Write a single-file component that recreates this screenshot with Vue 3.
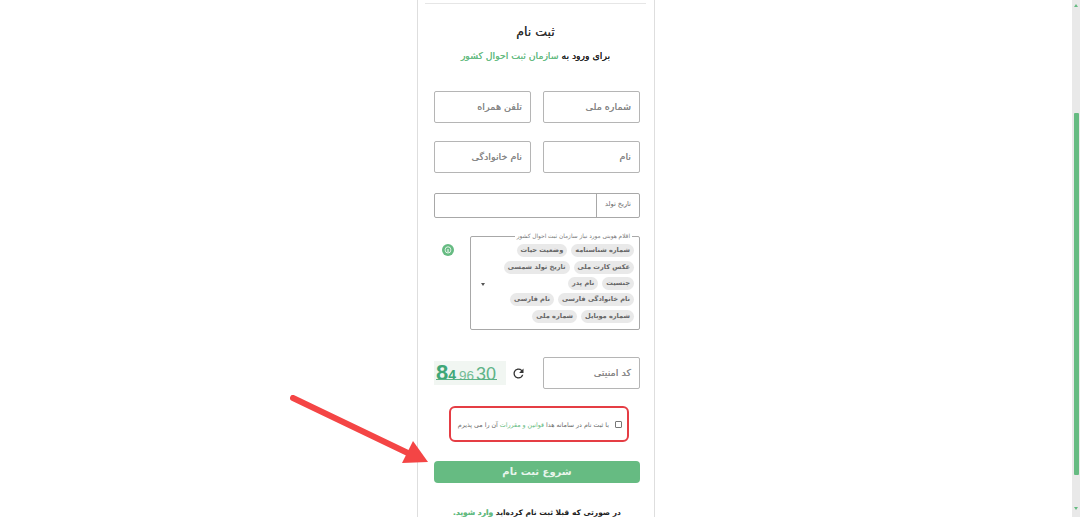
<template>
  <div class="screen">
    <div class="page">
      <div class="card">
        <hr class="top-line" />
        <h2 class="title">ثبت نام</h2>
        <p class="subtitle">برای ورود به <span class="green">سازمان ثبت احوال کشور</span></p>

        <div class="form">
          <div class="row first">
            <div class="field">شماره ملی</div>
            <div class="field">تلفن همراه</div>
          </div>
          <div class="row second">
            <div class="field">نام</div>
            <div class="field">نام خانوادگی</div>
          </div>

          <div class="date-group">
            <span class="date-label">تاریخ تولد</span>
            <span class="date-input"></span>
          </div>

          <div class="select-row">
            <fieldset class="scopes">
              <legend>اقلام هویتی مورد نیاز سازمان ثبت احوال کشور</legend>
              <div v-for="(line, i) in scopeRows" :key="i" class="chip-row">
                <span v-for="chip in line" :key="chip" class="chip">{{ chip }}</span>
              </div>
              <span class="caret"></span>
            </fieldset>
            <svg class="info-icon" viewBox="0 0 12 12">
              <circle cx="6" cy="6" r="6" fill="#66bb82" />
              <rect x="3.2" y="2.8" width="5.6" height="6.2" rx="2.8" fill="none" stroke="#e4f4e9" stroke-width="1" />
              <rect x="5.4" y="5" width="1.2" height="3.2" fill="#e4f4e9" />
            </svg>
          </div>

          <div class="captcha-row">
            <div class="field">کد امنیتی</div>
            <svg class="refresh" viewBox="0 0 24 24">
              <path fill="#333" d="M17.65 6.35A7.958 7.958 0 0 0 12 4c-4.42 0-7.99 3.58-7.99 8s3.57 8 7.99 8c3.73 0 6.84-2.55 7.73-6h-2.08A5.99 5.99 0 0 1 12 18c-3.31 0-6-2.69-6-6s2.69-6 6-6c1.66 0 3.14.69 4.22 1.78L13 11h7V4l-2.35 2.35z" />
            </svg>
            <div class="captcha">
              <span class="big">8</span><span class="small">4</span>
              <span class="mid">96</span>
              <span class="last">30</span>
              <i class="strike"></i>
            </div>
          </div>

          <div class="terms">
            <span class="check"></span>
            <span>با ثبت نام در سامانه هدا <span class="green">قوانین و مقررات</span> آن را می پذیرم</span>
          </div>

          <button class="submit" type="button">شروع ثبت نام</button>

          <p class="login-note">در صورتی که قبلا ثبت نام کرده‌اید <span class="green">وارد شوید.</span></p>
        </div>
      </div>
    </div>

    <div class="scrollbar">
      <span class="arrow up"></span>
      <span class="thumb"></span>
      <span class="arrow down"></span>
    </div>

    <svg class="pointer" viewBox="0 0 150 75">
      <line x1="3" y1="3" x2="122" y2="60" stroke="#f44545" stroke-width="6" stroke-linecap="round" />
      <polygon points="123,46 138,67 112,68" fill="#f44545" />
    </svg>
  </div>
</template>

<script setup>
const scopeRows = [
  ['شماره شناسنامه', 'وضعیت حیات'],
  ['عکس کارت ملی', 'تاریخ تولد شمسی'],
  ['جنسیت', 'نام پدر'],
  ['نام خانوادگی فارسی', 'نام فارسی'],
  ['شماره موبایل', 'شماره ملی'],
]
</script>

<style>
html,
body {
  margin: 0;
  height: 517px;
  overflow: hidden;
  background: #fff;
}
</style>

<style scoped>
.screen {
  position: relative;
  display: flex;
  width: 1080px;
  height: 517px;
  overflow: hidden;
  background: #fff;
  font-family: 'DejaVu Sans', sans-serif;
  color: #333;
}

.page {
  flex: 1;
  display: flex;
  justify-content: center;
}

.card {
  box-sizing: border-box;
  width: 238px;
  height: 517px;
  padding: 3px 8px 0 7px;
  border-left: 1px solid #dedede;
  border-right: 1px solid #dedede;
  direction: rtl;
  overflow: hidden;
}

.top-line {
  margin: 0;
  border: 0;
  border-top: 1px solid #e6e6e6;
}

.title {
  margin: 20px 0 0;
  height: 16px;
  line-height: 16px;
  font-size: 12.5px;
  font-weight: 400;
  text-align: center;
  color: #333;
  text-shadow: 0 0 0.4px #333;
}

.subtitle {
  margin: 9px 0 0;
  height: 14px;
  line-height: 14px;
  font-size: 9.3px;
  text-align: center;
  color: #222;
  text-shadow: 0 0 0.4px #222;
}

.green {
  color: #66bb82;
  text-shadow: 0 0 0.4px #66bb82;
}

.form {
  padding: 0 6px 0 9px;
}

.row {
  display: flex;
  justify-content: space-between;
}

.row.first {
  margin-top: 28px;
}

.row.second {
  margin-top: 18px;
}

.field {
  box-sizing: border-box;
  width: 97px;
  height: 32px;
  padding-right: 8px;
  line-height: 30px;
  font-size: 9.6px;
  color: #888;
  background: #fff;
  border: 1px solid #b5b5b5;
  border-radius: 2px;
  text-shadow: 0 0 0.4px #888;
}

.date-group {
  display: flex;
  height: 25px;
  margin-top: 20px;
  box-sizing: border-box;
  border: 1px solid #a8a8a8;
  border-radius: 2px;
}

.date-label {
  width: 42px;
  line-height: 21px;
  font-size: 6.6px;
  text-align: center;
  color: #666;
  border-left: 1px solid #a8a8a8;
}

.date-input {
  flex: 1;
}

.select-row {
  display: flex;
  margin-top: 14px;
}

.scopes {
  position: relative;
  box-sizing: border-box;
  width: 170px;
  height: 98px;
  margin: 0;
  padding: 2.5px 5px 0;
  border: 1px solid #a8a8a8;
  border-radius: 2px;
}

.scopes legend {
  margin: 0 2px;
  padding: 0 2px;
  font-size: 5.8px;
  line-height: 8px;
  color: #777;
}

.chip-row {
  display: flex;
  gap: 4px;
  height: 16.4px;
  align-items: center;
}

.chip {
  padding: 0 4px;
  height: 13px;
  line-height: 13px;
  font-size: 6.6px;
  font-weight: 700;
  white-space: nowrap;
  color: #666;
  background: #e9e9e9;
  border-radius: 6.5px;
}

.caret {
  position: absolute;
  left: 10px;
  top: 43px;
  border-top: 3px solid #555;
  border-left: 2px solid transparent;
  border-right: 2px solid transparent;
}

.info-icon {
  width: 12px;
  height: 12px;
  margin: 12px 16px 0 0;
}

.captcha-row {
  display: flex;
  align-items: center;
  margin-top: 27px;
}

.refresh {
  width: 15px;
  height: 15px;
  margin-right: 17px;
}

.captcha {
  position: relative;
  direction: ltr;
  box-sizing: border-box;
  width: 72px;
  height: 24px;
  margin-right: 5px;
  padding-left: 2px;
  line-height: 24px;
  white-space: nowrap;
  color: #3fa777;
  background: #f1f6f2;
  font-family: 'Liberation Sans', sans-serif;
}

.big {
  font-size: 22px;
  font-weight: 700;
}

.small {
  font-size: 14px;
  font-weight: 700;
}

.mid {
  margin-left: 3px;
  font-size: 13.5px;
  color: #74bd96;
}

.last {
  margin-left: 2px;
  font-size: 18px;
  color: #5fb388;
}

.strike {
  position: absolute;
  left: 2px;
  right: 9px;
  top: 18px;
  height: 1px;
  background: #5cb286;
}

.terms {
  display: flex;
  align-items: center;
  gap: 6px;
  box-sizing: border-box;
  width: 180px;
  height: 36px;
  margin: 17px 11px 0 0;
  padding: 0 5px 0 0;
  font-size: 6.3px;
  color: #666;
  border: 2px solid #e53d44;
  border-radius: 6px;
  white-space: nowrap;
}

.terms .green {
  text-shadow: none;
}

.check {
  flex: none;
  box-sizing: border-box;
  width: 7px;
  height: 7px;
  background: #fff;
  border: 1px solid #777;
  border-radius: 1px;
}

.submit {
  display: block;
  width: 206px;
  height: 22px;
  margin-top: 19px;
  padding: 0 0 2px;
  font-family: inherit;
  font-size: 10px;
  font-weight: 700;
  letter-spacing: 0.3px;
  color: #e8f5ec;
  background: #66bb82;
  border: 0;
  border-radius: 4px;
}

.login-note {
  margin: 23px 0 0;
  font-size: 7.5px;
  font-weight: 700;
  line-height: 14px;
  text-align: center;
  color: #222;
  white-space: nowrap;
}

.scrollbar {
  display: flex;
  flex-direction: column;
  align-items: center;
  flex: none;
  width: 8px;
  height: 517px;
  background: #e9e9e9;
}

.arrow {
  flex: none;
  border-left: 2.5px solid transparent;
  border-right: 2.5px solid transparent;
}

.arrow.up {
  margin-top: 4px;
  border-bottom: 3px solid #66bb82;
}

.arrow.down {
  margin-top: 32px;
  border-top: 3px solid #66bb82;
}

.thumb {
  flex: none;
  width: 5px;
  height: 362px;
  margin-top: 106px;
  background: #66bb82;
  border-radius: 1px;
}

.pointer {
  position: absolute;
  left: 290px;
  top: 395px;
  width: 150px;
  height: 75px;
}
</style>
